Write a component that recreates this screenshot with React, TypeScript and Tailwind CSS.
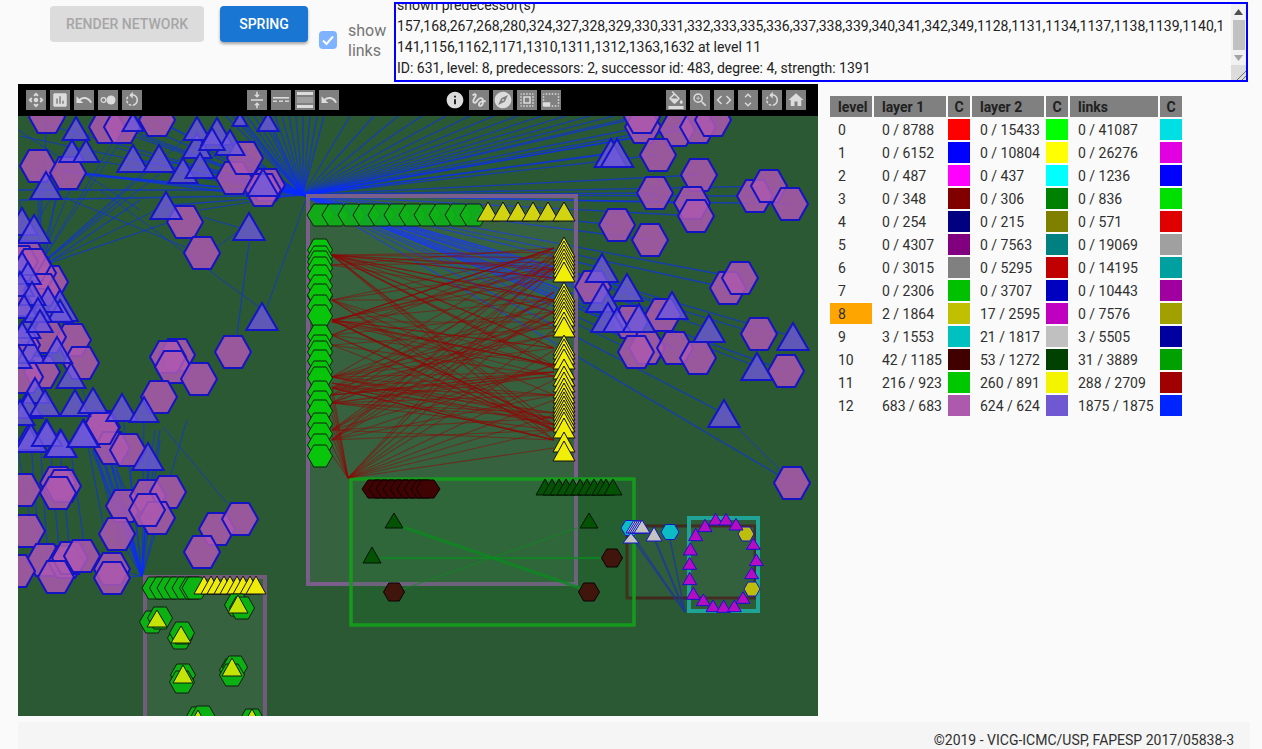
import React from "react";
import {
  MdControlCamera, MdAssessment, MdUndo, MdRotateLeft, MdVerticalAlignCenter, MdInfo, MdGesture, MdExplore,
  MdSelectAll, MdPhotoSizeSelectSmall, MdFormatColorFill, MdZoomIn, MdCode, MdUnfoldMore, MdHome,
} from "react-icons/md";

type P = [number, number];
const hexPts = (x: number, y: number, r: number, h = r * 0.89) =>
  `${x - r},${y} ${x - r / 2},${y - h} ${x + r / 2},${y - h} ${x + r},${y} ${x + r / 2},${y + h} ${x - r / 2},${y + h}`;
const triPts = (x: number, a: number, b: number, w: number) => `${x},${a} ${x + w},${b} ${x - w},${b}`;

const blueHex: P[] = [
  [38,166],[68,173],[47,117],[107,127],[122,127],[157,120],[234,178],[245,158],[267,185],[263,190],[185,222],[202,253],[233,352],[177,355],[168,357],[173,367],[199,379],[159,397],
  [102,427],[112,448],[128,450],[23,490],[58,483],[63,486],[58,493],[124,506],[148,496],[168,492],[157,518],[147,510],[117,534],[27,531],[45,560],[66,562],[70,558],[82,556],[56,577],[17,571],[112,569],[112,578],[217,529],[240,519],[202,552],
  [643,127],[642,117],[677,130],[698,127],[713,120],[658,155],[699,175],[655,193],[692,203],[696,216],[617,225],[650,240],[755,196],[769,186],[790,204],[728,288],[740,278],[593,287],[630,322],[663,315],[647,348],[636,352],[675,348],[698,358],[759,334],[786,371],[792,483],
  [50,282],[38,273],[28,257],[73,340],[81,363],[42,372],[48,337],[25,377],[101,428],[20,300],[22,345],[20,262],[33,265],[42,290],
];
const blueTri: [number, number, number][] = [
  [76,117,140],[72,140,162],[86,140,162],[133,145,172],[159,145,172],[183,158,183],[197,133,158],[200,153,178],[197,117,140],[217,118,145],[230,130,155],[212,128,150],[240,113,126],[268,113,131],[133,113,131],[46,172,199],[22,208,235],[34,215,243],[166,192,219],[249,213,240],[262,303,330],[263,169,196],
  [60,290,321],[60,300,322],[48,287,312],[27,315,338],[31,338,363],[57,337,363],[71,363,388],[35,378,403],[28,393,418],[45,390,416],[75,390,416],[93,388,413],[122,394,421],[144,397,422],[46,420,446],[28,425,450],[84,420,447],[60,430,457],[31,424,452],[47,420,446],[61,430,457],[83,420,447],[148,443,470],
  [22,252,275],[28,262,284],[20,272,296],[32,282,305],[24,295,318],[38,298,322],[22,322,345],[18,345,368],[40,310,332],[20,400,425],
  [611,139,167],[617,139,167],[602,254,282],[627,274,301],[603,283,312],[608,303,332],[617,308,332],[639,304,332],[672,292,319],[709,315,342],[793,323,350],[757,353,380],[724,400,427],
];

const hubA: P = [303, 195], hubB: P = [38, 267], hubC: P = [142, 576];
const blueLines: [number, number, number, number, number][] = [];
blueHex.forEach(([x, y], i) => {
  if (x > 300 || (y < 200 && x > 90)) blueLines.push([hubA[0], hubA[1], x, y, 1.3]);
  if (y < 200 && x < 200 && i % 2 === 0) blueLines.push([hubB[0], hubB[1], x, y, 1]);
  if (y > 440 && x >= 100 && x < 180) blueLines.push([hubC[0], hubC[1], x, y, 1.1]);
});
blueTri.forEach(([x, a, b], i) => {
  if (x > 300 || (a < 200 && x > 90)) blueLines.push([hubA[0], hubA[1], x, (a + b) / 2, 1.3]);
  if (a < 200 && x < 200 && i % 2 === 0) blueLines.push([hubB[0], hubB[1], x, (a + b) / 2, 1]);
  if (a > 380 && x >= 85 && x < 180) blueLines.push([hubC[0], hubC[1], x, (a + b) / 2, 1.1]);
});
for (let x = 226; x <= 330; x += 7) blueLines.push([303, 195, x, 116, 1.4]);
for (let x = 350; x <= 640; x += 24) blueLines.push([303, 195, x, 116, 1.2]);
for (let x = 20; x <= 210; x += 24) blueLines.push([303, 195, x, 116 + ((x * 7) % 60), 1.2]);
blueLines.push(
  [38,267,167,223,1.2],[100,190,263,310,1],[63,197,185,247,1],[249,242,237,335,1.2],[307,197,267,307,1],[200,210,307,193,1],[203,217,240,228,1],[217,247,240,230,1],
  [163,427,227,503,1],[187,420,170,477,1],[142,576,93,450,3],[142,576,100,450,3],[142,576,108,452,2],[20,200,300,195,1.4],[18,190,300,190,1.3],[60,170,250,195,2],[87,175,217,187,2],[18,130,140,210,1],[100,116,20,250,1],[120,200,40,265,1.2],[140,200,45,265,1.2],
  [737,427,783,473,1],[30,430,40,560,1.2],[40,440,48,560,1.2],[50,445,60,560,1.2],[60,450,70,555,1.2],[70,445,85,550,1.2],[85,430,110,560,1.2],[100,470,120,540,1],[160,430,150,490,1.2],[155,430,145,500,1],[142,576,160,440,1.2],[142,576,150,450,1.2],
  [82,390,130,500,1],[75,395,125,490,1],[20,200,25,240,1],[40,190,40,230,1],[55,200,45,260,1],[18,450,30,520,1],
);

const rightA = [248,252,258,262,268,270,278,292,300,312,322,328,335,348,365,368,372,376,395,400,413,418,425,430,440];
const leftA = [255,255,255,265,320,320,320,322,335,377,377,377,383,388,395,403,403,430,440,300,345];
const redLines: [number, number, number, number][] = [];
let seed = 17;
const rnd = (n: number) => { seed = (seed * 1103515245 + 12345) & 0x7fffffff; return (seed >> 8) % n; };
for (let i = 0; i < 105; i++) redLines.push([332, leftA[rnd(leftA.length)], 554, rightA[rnd(rightA.length)]]);
for (const y of [385,395,405,415,425,435,445,455]) redLines.push([348, 478, 332, y]);
for (const y of [255,270,300,330,350,380,400,415,430,448]) redLines.push([348, 478, 554, y]);

const rightApex = [237,241,245,249,253,257,262,282,286,290,294,298,302,306,312,317,335,339,344,349,359,366,372,378,383,388,392,396,400,404,408,412,418,432,441];
const ring: [number, number][] = [[130,165],[130,165],[145,180],[148,185],[175,212],[205,238],[218,255],[252,287],[262,298],[292,326],[307,344],[352,388],[365,400],[372,407],[390,425],[390,427],[390,425]];
const ringX = [1127,1158,1188,1095,1067,1240,1051,1249,1049,1235,1049,1060,1209,1090,1119,1151,1183];

const pairs: { h: P[]; t: [number, number, number] }[] = [
  { h: [[152,622],[160,618]], t: [157,610,627] },
  { h: [[180,638],[182,633]], t: [181,626,643] },
  { h: [[183,675],[182,682]], t: [183,665,683] },
  { h: [[232,670],[235,667],[232,675]], t: [232,658,676] },
  { h: [[237,605],[242,608]], t: [238,595,613] },
  { h: [[198,718],[203,717]], t: [198,710,728] },
  { h: [[252,720]], t: [252,709,727] },
];

function Graph() {
  return (
    <svg viewBox="18 116 800 600" className="block h-[600px] w-[800px] bg-[#2a5934]">
      {blueLines.map((l, i) => (
        <line key={i} x1={l[0]} y1={l[1]} x2={l[2]} y2={l[3]} stroke="#0a2bff" strokeOpacity={0.62} strokeWidth={l[4]} />
      ))}
      <rect x={308} y={196} width={268} height={388} fill="#fff" fillOpacity={0.06} stroke="#7b5e8b" strokeWidth={4} />
      <rect x={145} y={577} width={120} height={150} fill="#fff" fillOpacity={0.06} stroke="#745a7c" strokeWidth={4} />
      <rect x={627} y={526} width={128} height={72} fill="#fff" fillOpacity={0.03} stroke="#42291f" strokeWidth={3} />
      <rect x={689} y={518} width={69} height={93} fill="#fff" fillOpacity={0.02} stroke="#1fa396" strokeWidth={4} />
      <rect x={351} y={479} width={283} height={146} fill="#0b8a1a" fillOpacity={0.12} stroke="#159a1c" strokeWidth={3.5} />
      {redLines.map((l, i) => (
        <line key={i} x1={l[0]} y1={l[1]} x2={l[2]} y2={l[3]} stroke="#8f0808" strokeOpacity={0.55} strokeWidth={1.1} />
      ))}
      <g stroke="#0b8a1f" strokeOpacity={0.8}>
        <line x1={403} y1={527} x2={580} y2={588} strokeWidth={3} />
        <line x1={380} y1={558} x2={602} y2={558} strokeWidth={2} />
        <line x1={403} y1={589} x2={580} y2={527} strokeWidth={1} />
      </g>
      <g stroke="#1a3a9a" strokeOpacity={0.8}>
        <line x1={685} y1={612} x2={634} y2={540} strokeWidth={2} />
        <line x1={685} y1={612} x2={655} y2={540} strokeWidth={2} />
        <line x1={685} y1={612} x2={670} y2={540} strokeWidth={1.5} />
        <line x1={685} y1={612} x2={630} y2={530} strokeWidth={1} />
      </g>

      <g fill="#ab58ae" fillOpacity={0.85} stroke="#1414c4" strokeWidth={2}>
        {blueHex.map(([x, y], i) => <polygon key={i} points={hexPts(x, y, 18)} />)}
      </g>
      <g fill="#6f58dc" fillOpacity={0.78} stroke="#1414c8" strokeWidth={2}>
        {blueTri.map(([x, a, b], i) => <polygon key={i} points={triPts(x, a, b, (b - a) * 0.58)} />)}
      </g>

      <g fill="#0fb316" fillOpacity={0.9} stroke="#102010" strokeWidth={1}>
        {[307,322,338,353,368,384,399,414,429,445,460].map((x, i) => <polygon key={i} points={hexPts(x + 13.5, 215, 13.5, 11)} />)}
      </g>
      <g fill="#d2d412" stroke="#101010" strokeWidth={1}>
        {[488,503,518,533,548,564].map((x, i) => <polygon key={i} points={triPts(x, 202, 221, 11)} />)}
      </g>
      <g fill="#08c40a" stroke="#102010" strokeWidth={1}>
        {[250,257,262,268,276,286,296,295,306,316,336,346,352,361,372,378,392,402,411,424,434,445,456].map((y, i) => (
          <polygon key={i} points={hexPts(320, y, 12.5, 11)} />
        ))}
      </g>
      <g fill="#f1ef07" stroke="#101010" strokeWidth={1}>
        {rightApex.map((y, i) => <polygon key={i} points={triPts(564, y, y + 20, 11)} />)}
      </g>

      <g fill="#3f0303" stroke="#0c0000" strokeWidth={1}>
        {[374,381,388,395,402,409,416,423,428].map((x, i) => <polygon key={i} points={hexPts(x, 489, 12, 9)} />)}
      </g>
      <g fill="#40150c" stroke="#0c0000" strokeWidth={1}>
        <polygon points={hexPts(394, 592, 10.5, 9)} />
        <polygon points={hexPts(589, 592, 10.5, 9)} />
        <polygon points={hexPts(612, 558, 10.5, 9)} />
      </g>
      <g fill="#045204" stroke="#021402" strokeWidth={1}>
        {[545,552,559,566,573,580,587,594,601,606,613].map((x, i) => <polygon key={i} points={triPts(x, 479, 495, 9)} />)}
        <polygon points={triPts(394, 513, 528, 9)} />
        <polygon points={triPts(589, 513, 528, 9)} />
        <polygon points={triPts(372, 547, 563, 9)} />
      </g>

      <g stroke="#1414c8" strokeWidth={1}>
        <polygon points={hexPts(630, 528, 9, 7.5)} fill="#0bbcc4" />
        <polygon points={hexPts(670, 532, 9, 7.5)} fill="#0bbcc4" />
        {[634,636,638,640].map((x, i) => <polygon key={i} points={triPts(x, 520, 533, 8)} fill="#c4c4c4" />)}
        <polygon points={triPts(642, 520, 533, 8)} fill="#c4c4c4" />
        <polygon points={triPts(654, 527, 541, 8)} fill="#c4c4c4" />
        <polygon points={triPts(631, 533, 543, 8)} fill="#c4c4c4" />
        <polygon points={hexPts(746, 534, 8, 7)} fill="#bdbd0c" />
        <polygon points={hexPts(752, 589, 8, 7)} fill="#bdbd0c" />
        {ring.map(([a, b], i) => (
          <polygon key={i} points={triPts(340 + ringX[i] / 3, 470 + a / 3, 470 + b / 3, 7)} fill="#b50cc4" />
        ))}
      </g>

      <g fill="#0bb412" stroke="#101c10" strokeWidth={1}>
        {[155,162.5,170,177.5,185,192.5,195].map((x, i) => <polygon key={i} points={hexPts(x, 588, 13, 11)} />)}
      </g>
      <g fill="#efec0a" stroke="#141414" strokeWidth={1}>
        {[204,211,217,224,230,237,243,250,256].map((x, i) => <polygon key={i} points={triPts(x, 576, 594, 10)} />)}
      </g>
      {pairs.map((p, i) => (
        <g key={i} stroke="#101c10" strokeWidth={1}>
          {p.h.map(([x, y], j) => <polygon key={j} points={hexPts(x, y, 12.5, 11)} fill="#0bb012" />)}
          <polygon points={triPts(p.t[0], p.t[1], p.t[2], 10)} fill="#c4e408" />
        </g>
      ))}
    </svg>
  );
}

function Btn({ children, bare }: { children?: React.ReactNode; bare?: boolean }) {
  return (
    <div className={`flex h-5 w-5 items-center justify-center text-[#dcdcdc] ${bare ? "" : "bg-[#808080]"}`}>
      {children}
    </div>
  );
}

function Toolbar() {
  const s = 18;
  return (
    <div className="flex h-8 w-[800px] items-center bg-black pl-2">
      <div className="flex gap-1">
        <Btn><MdControlCamera size={s} /></Btn>
        <Btn><MdAssessment size={s} /></Btn>
        <Btn><MdUndo size={s} /></Btn>
        <Btn>
          <svg width="18" height="18" viewBox="0 0 18 18">
            <circle cx="4.5" cy="9" r="2.4" fill="none" stroke="currentColor" strokeWidth="1.2" />
            <circle cx="12" cy="9" r="4.5" fill="currentColor" />
          </svg>
        </Btn>
        <Btn><MdRotateLeft size={s} /></Btn>
      </div>
      <div className="ml-[105px] flex gap-1">
        <Btn><MdVerticalAlignCenter size={s} /></Btn>
        <Btn>
          <svg width="18" height="18" viewBox="0 0 18 18" fill="currentColor">
            <rect x="1" y="6" width="16" height="1.6" />
            <rect x="1" y="9.5" width="4" height="1.4" /><rect x="7" y="9.5" width="4" height="1.4" /><rect x="13" y="9.5" width="4" height="1.4" />
          </svg>
        </Btn>
        <Btn>
          <svg width="18" height="18" viewBox="0 0 18 18" fill="currentColor">
            <rect x="1" y="1" width="16" height="3" /><rect x="1" y="14" width="16" height="3" />
            <rect x="1" y="6" width="16" height="6" fillOpacity="0.35" />
          </svg>
        </Btn>
        <Btn><MdUndo size={s} /></Btn>
      </div>
      <div className="ml-[106px] flex gap-1">
        <Btn bare><MdInfo size={20} /></Btn>
        <Btn><MdGesture size={s} /></Btn>
        <div className="flex h-5 w-5 items-center justify-center overflow-hidden bg-[#808080] text-[#dcdcdc]"><MdExplore size={24} /></div>
        <Btn><MdSelectAll size={s} /></Btn>
        <Btn><MdPhotoSizeSelectSmall size={s} /></Btn>
      </div>
      <div className="ml-[105px] flex gap-1">
        <Btn><MdFormatColorFill size={s} /></Btn>
        <Btn><MdZoomIn size={s} /></Btn>
        <Btn><MdCode size={s} /></Btn>
        <Btn><MdUnfoldMore size={s} /></Btn>
        <Btn><MdRotateLeft size={s} /></Btn>
        <Btn><MdHome size={s} /></Btn>
      </div>
    </div>
  );
}

const rows: [string, string, string, string, string, string][] = [
  ["0 / 8788","#ff0000","0 / 15433","#00ff00","0 / 41087","#00e0e4"],
  ["0 / 6152","#0000ff","0 / 10804","#ffff00","0 / 26276","#e000e0"],
  ["0 / 487","#ff00ff","0 / 437","#00ffff","0 / 1236","#0000ff"],
  ["0 / 348","#800000","0 / 306","#008000","0 / 836","#00e000"],
  ["0 / 254","#000080","0 / 215","#808000","0 / 571","#e00000"],
  ["0 / 4307","#800080","0 / 7563","#008080","0 / 19069","#a0a0a0"],
  ["0 / 3015","#808080","0 / 5295","#c00000","0 / 14195","#00a0a0"],
  ["0 / 2306","#00c000","0 / 3707","#0000c0","0 / 10443","#a000a0"],
  ["2 / 1864","#c0c000","17 / 2595","#c000c0","0 / 7576","#a0a000"],
  ["3 / 1553","#00c0c0","21 / 1817","#c0c0c0","3 / 5505","#0000a0"],
  ["42 / 1185","#400000","53 / 1272","#004000","31 / 3889","#00a000"],
  ["216 / 923","#00c800","260 / 891","#f4f400","288 / 2709","#a00000"],
  ["683 / 683","#ad5aae","624 / 624","#7058d2","1875 / 1875","#0024ff"],
];

function LevelTable() {
  const th = "h-[21px] bg-[#808080] p-0 pl-2 text-left text-sm font-bold text-[#212121]";
  const thc = "h-[21px] bg-[#808080] p-0 text-center text-sm font-bold text-[#212121]";
  const td = "h-[21px] p-0 pl-2 text-sm text-[#303030]";
  return (
    <table className="ml-[10px] mt-[10px] h-fit w-[356px] table-fixed border-separate border-spacing-[2px]">
      <colgroup>
        <col className="w-[42px]" /><col className="w-[72px]" /><col className="w-[22px]" /><col className="w-[72px]" />
        <col className="w-[22px]" /><col className="w-[88px]" /><col className="w-[22px]" />
      </colgroup>
      <thead>
        <tr>
          <th className={th}>level</th><th className={th}>layer 1</th><th className={thc}>C</th>
          <th className={th}>layer 2</th><th className={thc}>C</th><th className={th}>links</th><th className={thc}>C</th>
        </tr>
      </thead>
      <tbody>
        {rows.map((r, i) => (
          <tr key={i}>
            <td className={`${td} ${i === 8 ? "bg-[#ffa500]" : ""}`}>{i}</td>
            <td className={td}>{r[0]}</td>
            <td className="p-0" style={{ backgroundColor: r[1] }} />
            <td className={td}>{r[2]}</td>
            <td className="p-0" style={{ backgroundColor: r[3] }} />
            <td className={td}>{r[4]}</td>
            <td className="p-0" style={{ backgroundColor: r[5] }} />
          </tr>
        ))}
      </tbody>
    </table>
  );
}

function InfoBox() {
  return (
    <div className="mt-[2px] flex h-20 w-[854px] overflow-hidden border-2 border-[#0000ff] text-sm leading-[21px] text-[#222222]">
      <div className="-mt-[9px] min-w-0 flex-1 whitespace-nowrap pl-[1px]">
        <div>shown predecessor(s)</div>
        <div>157,168,267,268,280,324,327,328,329,330,331,332,333,335,336,337,338,339,340,341,342,349,1128,1131,1134,1137,1138,1139,1140,1</div>
        <div>141,1156,1162,1171,1310,1311,1312,1363,1632 at level 11</div>
        <div>ID: 631, level: 8, predecessors: 2, successor id: 483, degree: 4, strength: 1391</div>
      </div>
      <div className="flex w-[15px] flex-col bg-[#f1f1f1]">
        <div className="flex h-[15px] items-center justify-center">
          <svg width="9" height="6" viewBox="0 0 9 6"><path d="M4.5 0 9 6H0z" fill="#505050" /></svg>
        </div>
        <div className="h-[31px] pl-[2px] pr-[1px] pt-[1px]"><div className="h-[30px] bg-[#c1c1c1]" /></div>
        <div className="flex h-[15px] items-center justify-center">
          <svg width="9" height="6" viewBox="0 0 9 6"><path d="M0 0h9L4.5 6z" fill="#a3a3a3" /></svg>
        </div>
        <div className="flex h-[15px] items-end justify-end bg-[#dcdcdc]">
          <svg width="10" height="10" viewBox="0 0 10 10" stroke="#6e6e6e"><path d="M1 10 10 1M6 10l4-4" /></svg>
        </div>
      </div>
    </div>
  );
}

export default function App() {
  return (
    <div className="h-[749px] w-[1262px] overflow-hidden bg-[#fafafa] font-['Roboto',sans-serif]">
      <div className="flex h-[84px] items-start pl-[50px]">
        <button className="mt-[6px] h-9 w-[154px] rounded bg-[#dcdcdc] text-sm font-medium text-[#a6a6a6]">RENDER NETWORK</button>
        <button className="ml-4 mt-[6px] h-9 w-[88px] rounded bg-[#1976d2] text-sm font-medium text-white shadow-[0_2px_3px_rgba(0,0,0,0.35)]">SPRING</button>
        <div className="ml-[11px] mt-[31px] flex h-[18px] w-[18px] items-center justify-center rounded-sm bg-[#7fb3ff]">
          <svg width="14" height="14" viewBox="0 0 14 14" fill="none" stroke="#fff" strokeWidth="2"><path d="M2 7.5 5.5 11 12 3.5" /></svg>
        </div>
        <div className="ml-[11px] mt-[21px] w-[46px] text-base leading-[20px] text-[#757575]">show links</div>
        <InfoBox />
      </div>
      <div className="flex h-[632px] pl-[18px]">
        <div className="w-[800px]">
          <Toolbar />
          <Graph />
        </div>
        <LevelTable />
      </div>
      <div className="ml-[18px] mt-[6px] h-[27px] w-[1232px] bg-[#f5f5f5] pr-4 pt-[8px] text-right text-sm leading-[21px] text-[#303030]">
        ©2019 - VICG-ICMC/USP, FAPESP 2017/05838-3
      </div>
    </div>
  );
}
